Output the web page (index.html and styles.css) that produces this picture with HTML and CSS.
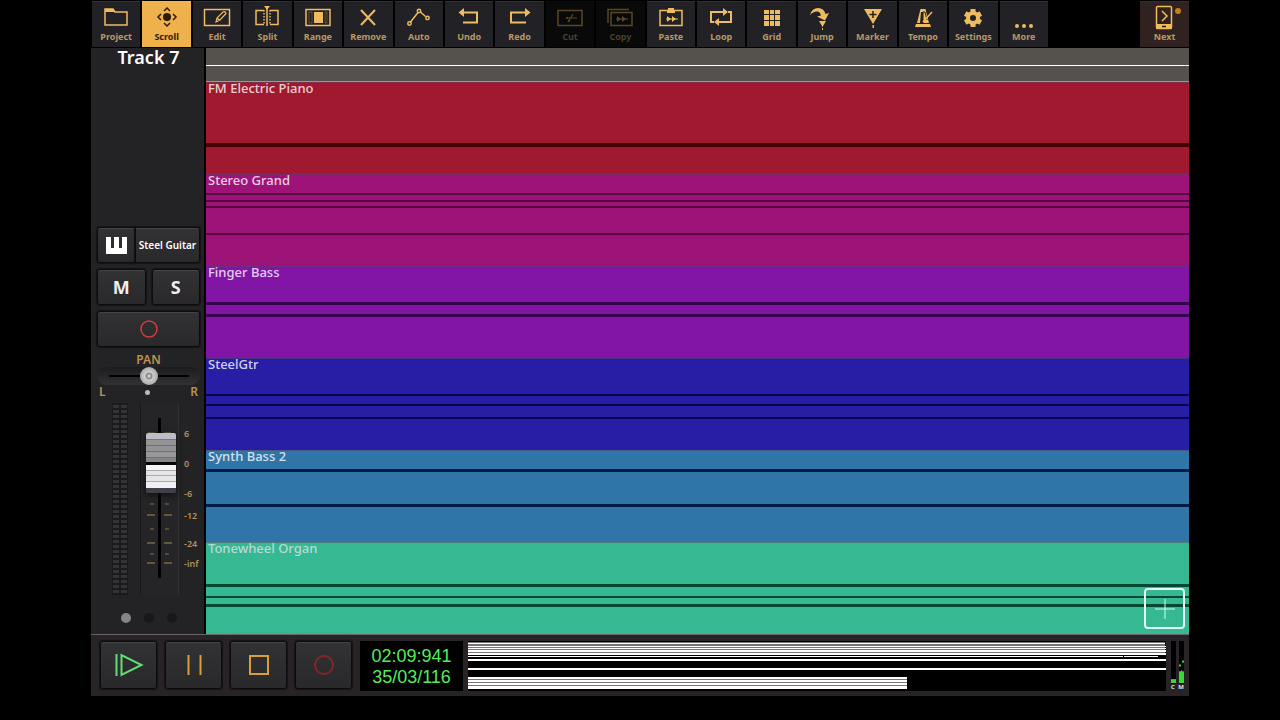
FILE: index.html
```html
<!DOCTYPE html>
<html lang="en">

<head>
    <meta charset="UTF-8">
    <meta name="viewport" content="width=device-width, initial-scale=1.0">
    <title>Track 7</title>
    <link rel="stylesheet" href="styles.css">
</head>

<body>
    <div class="app">
        <nav class="toolbar">
            <button class="tool" type="button">
                <svg class="icon" viewBox="0 0 28 28"><path d="M3 21V5h8l2 3h12v13z" /><path class="fill" d="M3 5h8l2 3H3z" /></svg>
                Project
            </button>
            <button class="tool active" type="button">
                <svg class="icon" viewBox="0 0 28 28"><circle class="fill" cx="14" cy="13" r="4" /><path d="M11 7l3-3 3 3M11 19l3 3 3-3M8 10l-3 3 3 3M20 10l3 3-3 3" /></svg>
                Scroll
            </button>
            <button class="tool" type="button">
                <svg class="icon" viewBox="0 0 28 28"><path d="M1.500 5.500h25v16h-25z" /><path d="M13 18l1-4 6-6q2-1 3 1.500l-6 6.500zM14 14l3 2.500" stroke-width="1.200" /></svg>
                Edit
            </button>
            <button class="tool" type="button">
                <svg class="icon" viewBox="0 0 28 28"><path d="M11 6.500H3v14h8M17 6.500h8v14h-8" /><path d="M11 6v15M17 6v15" stroke-dasharray="1.500 1.500" /><path d="M14 4v18" /><path class="fill" d="M11 2h6l-3 4z" /></svg>
                Split
            </button>
            <button class="tool" type="button">
                <svg class="icon" viewBox="0 0 28 28"><path d="M2 5.500h24v16H2z" /><path class="fill" d="M10 8h9v11h-9z" /><path d="M5 8h3v11H5zM21 8h2v11h-2z" stroke-width="1" opacity=".3" /></svg>
                Range
            </button>
            <button class="tool" type="button">
                <svg class="icon" viewBox="0 0 28 28"><path d="M7 6l14 15M21 6L7 21" stroke-width="2" /></svg>
                Remove
            </button>
            <button class="tool" type="button">
                <svg class="icon" viewBox="0 0 28 28"><path d="M5.500 18L13 8.500M15.500 8l5 4.500" /><circle cx="4.500" cy="19.500" r="1.700" /><circle cx="14" cy="7" r="1.700" /><circle cx="22.500" cy="14" r="1.700" /></svg>
                Auto
            </button>
            <button class="tool" type="button">
                <svg class="icon" viewBox="0 0 28 28"><path d="M8 8.500h14v10H8" stroke-width="2" /><path class="fill" d="M9 4v9L3.500 8.500z" /></svg>
                Undo
            </button>
            <button class="tool" type="button">
                <svg class="icon" viewBox="0 0 28 28"><path d="M20 8.500H5v10h15" stroke-width="2" /><path class="fill" d="M19 4v9l5.500-4.500z" /></svg>
                Redo
            </button>
            <button class="tool" type="button" disabled>
                <svg class="icon" viewBox="0 0 28 28"><path d="M2 6.500h24v15H2z" /><path d="M10 14h11M12 18l5-8" stroke-width="1.200" /><circle class="fill" cx="11" cy="14" r="1" /><circle class="fill" cx="13" cy="17" r="1" /></svg>
                Cut
            </button>
            <button class="tool" type="button" disabled>
                <svg class="icon" viewBox="0 0 28 28"><path d="M5 8.500h21v13H5zM2 19V5.500h21" /><path class="fill" d="M11 12l4 3-4 3zM16 12l4 3-4 3z" /><path d="M10 15h12" stroke-width="1" /></svg>
                Copy
            </button>
            <button class="tool" type="button">
                <svg class="icon" viewBox="0 0 28 28"><path d="M3 6.500h22v15H3z" /><path class="fill" d="M11 6V4h6v2h1v3h-8V6zM10 12l4 3-4 3zM15 12l4 3-4 3z" /><path d="M9 15h12" stroke-width="1" /></svg>
                Paste
            </button>
            <button class="tool" type="button">
                <svg class="icon" viewBox="0 0 28 28"><path d="M7 18H4V8h13M21 8h3v10H11" stroke-width="2" /><path class="fill" d="M16 4v8l5-4zM12 14v8l-5-4z" /></svg>
                Loop
            </button>
            <button class="tool" type="button">
                <svg class="icon" viewBox="0 0 28 28"><path class="fill" d="M6 6h5v4H6zM12 6h4v4h-4zM17 6h5v4h-5zM6 11h5v5H6zM12 11h4v5h-4zM17 11h5v5h-5zM6 17h5v5H6zM12 17h4v5h-4zM17 17h5v5h-5z" /></svg>
                Grid
            </button>
            <button class="tool" type="button">
                <svg class="icon" viewBox="0 0 28 28"><path class="fill" d="M2 11Q4 4 10 4q6 0 7.500 6l3.500-1-4 7.500-8-4 4-1q-1-4-4-4-4 0-7 3.500zM11 17h7l-3.500 6zM14 24h1v2h-1z" /></svg>
                Jump
            </button>
            <button class="tool" type="button">
                <svg class="icon" viewBox="0 0 28 28"><path class="fill" d="M5 5h18l-9 15zM13.500 21h1.500v3h-1.500z" /><path class="cutout" d="M14 7v7M10.500 10.500h7" /></svg>
                Marker
            </button>
            <button class="tool" type="button">
                <svg class="icon" viewBox="0 0 28 28"><path class="fill" d="M6 23l1-3h14l1 3zM8 19l3.500-14h5L20 19h-6v-11l-2 0-1 11z" /><path class="cutout" d="M14 19V8h2l2 8" stroke-width="1" /><path d="M14 18l9-10" /></svg>
                Tempo
            </button>
            <button class="tool" type="button">
                <svg class="icon" viewBox="0 0 28 28"><circle cx="14" cy="14" r="5" stroke-width="4" /><path d="M14 5v3M14 20v3M6.200 9.500l2.600 1.500M19.200 17l2.600 1.500M6.200 18.500l2.600-1.500M19.200 11l2.600-1.500" stroke-width="5" /></svg>
                Settings
            </button>
            <button class="tool" type="button">
                <svg class="icon" viewBox="0 0 28 28"><circle class="fill" cx="7" cy="22" r="2" /><circle class="fill" cx="14" cy="22" r="2" /><circle class="fill" cx="21" cy="22" r="2" /></svg>
                More
            </button>
            <button class="tool next" type="button">
                <svg class="icon" viewBox="0 0 28 28"><rect x="6.500" y="2.500" width="15" height="22" rx="1" /><path class="fill" d="M6 20h16v5H6z" /><path class="cutout" d="M12 22.500h4" /><path d="M12 7l5 5-5 5" /></svg>
                Next
                <span class="badge"></span>
            </button>
        </nav>

        <main class="workspace">
            <aside class="channel">
                <h1 class="channel-name">Track 7</h1>
                <div class="instrument">
                    <button class="key instrument-keys" type="button" aria-label="Keyboard">
                        <svg class="keys-icon" viewBox="0 0 21 17"><path d="M0 0h5v11h3V0h5v11h3V0h5v17H0z" /></svg>
                    </button>
                    <button class="key instrument-name" type="button">Steel Guitar</button>
                </div>
                <div class="mute-solo">
                    <button class="key" type="button" aria-label="Mute">M</button>
                    <button class="key" type="button" aria-label="Solo">S</button>
                </div>
                <button class="key arm" type="button" aria-label="Record arm">
                    <svg class="ring" viewBox="0 0 18 18"><circle cx="9" cy="9" r="8" /></svg>
                </button>

                <div class="pan">
                    <label class="pan-label" for="pan">PAN</label>
                    <input class="pan-slider" id="pan" type="range" min="-64" max="64" value="0">
                    <div class="pan-ends"><span>L</span><span class="pan-center"></span><span>R</span></div>
                </div>

                <div class="levels">
                    <div class="led-meter"></div>
                    <div class="fader">
                        <svg class="fader-scale" viewBox="0 0 62 192">
                            <path class="slot" d="M19.500 15v160" />
                            <path class="ticks" d="M8 30h7M24 30h7M7 112h8M24 112h8M7 140h8M24 140h8M7 160h8M24 160h8" />
                            <path class="ticks minor" d="M10 101h4M25 101h4M10 126h4M25 126h4M10 151h4M25 151h4" />
                            <text x="44" y="34">6</text>
                            <text x="44" y="64">0</text>
                            <text x="44" y="94">-6</text>
                            <text x="44" y="116">-12</text>
                            <text x="44" y="144">-24</text>
                            <text x="44" y="164">-inf</text>
                        </svg>
                        <input class="fader-slider" type="range" min="0" max="100" value="77" aria-label="Volume">
                    </div>
                </div>
                <div class="pages">
                    <span class="page current"></span>
                    <span class="page"></span>
                    <span class="page"></span>
                </div>
            </aside>

            <section class="arrange">
                <div class="ruler"></div>
                <div class="track red">
                    <svg class="notes" viewBox="0 0 100 92" preserveAspectRatio="none"><path d="M0 61h100v4H0z" /></svg>
                    <span class="clip-name">FM Electric Piano</span>
                </div>
                <div class="track magenta">
                    <svg class="notes" viewBox="0 0 100 92" preserveAspectRatio="none"><path d="M0 19h100v2H0zM0 26h100v2H0zM0 32h100v2H0zM0 59h100v2H0z" /></svg>
                    <span class="clip-name">Stereo Grand</span>
                </div>
                <div class="track purple">
                    <svg class="notes" viewBox="0 0 100 92" preserveAspectRatio="none"><path d="M0 36h100v3H0zM0 48h100v3H0z" /></svg>
                    <span class="clip-name">Finger Bass</span>
                </div>
                <div class="track blue">
                    <svg class="notes" viewBox="0 0 100 92" preserveAspectRatio="none"><path d="M0 36h100v2H0zM0 46h100v2H0zM0 59h100v2H0z" /></svg>
                    <span class="clip-name">SteelGtr</span>
                </div>
                <div class="track steel">
                    <svg class="notes" viewBox="0 0 100 92" preserveAspectRatio="none"><path d="M0 19h100v3H0zM0 54h100v3H0z" /></svg>
                    <span class="clip-name">Synth Bass 2</span>
                </div>
                <div class="track green">
                    <svg class="notes" viewBox="0 0 100 92" preserveAspectRatio="none"><path d="M0 42h100v3H0zM0 54h100v2H0zM0 62h100v3H0z" /></svg>
                    <span class="clip-name">Tonewheel Organ</span>
                </div>
                <button class="add-track" type="button" aria-label="Add track">
                    <svg viewBox="0 0 20 20"><path d="M10 0v20M0 10h20" /></svg>
                </button>
            </section>
        </main>

        <footer class="transport">
            <button class="key play" type="button" aria-label="Play">
                <svg viewBox="0 0 30 24"><path d="M2.500 1v22M7.500 2v20l20-10z" /></svg>
            </button>
            <button class="key pause" type="button" aria-label="Pause">
                <svg viewBox="0 0 30 24"><path d="M9.500 2v20M21.500 2v20" /></svg>
            </button>
            <button class="key stop" type="button" aria-label="Stop">
                <svg viewBox="0 0 30 24"><path d="M6 3h18v18H6z" /></svg>
            </button>
            <button class="key record" type="button" aria-label="Record">
                <svg viewBox="0 0 30 24"><circle cx="15" cy="12" r="9" /></svg>
            </button>
            <div class="clock">
                <span>02:09:941</span>
                <span>35/03/116</span>
            </div>
            <svg class="overview" viewBox="0 0 698 50" preserveAspectRatio="none">
                <path class="shade" d="M0 1h697v12H0zM0 36h439v12H0z" />
                <path class="line" d="M0 2h697v1H0zM0 5h698v1H0zM0 7h698v1H0zM0 9h698v2H0zM0 12h698v2H0zM0 15h690v1H0zM0 18h698v2H0zM0 27h698v2H0zM0 36h439v2H0zM0 39h439v2H0zM0 42h439v2H0zM0 45h439v3H0z" />
                <path class="gap" d="M655 14h1v3h-1z" />
            </svg>
            <div class="meters">
                <div class="meter">
                    <svg viewBox="0 0 5 44" preserveAspectRatio="none"><path d="M0 39h5v4H0z" /></svg>
                    C
                </div>
                <div class="meter">
                    <svg viewBox="0 0 5 44" preserveAspectRatio="none"><path d="M0 31h2v-1h1v1h2v12H0zM0 24h2v2H0zM3 20h2v2H3z" /></svg>
                    M
                </div>
            </div>
        </footer>
    </div>
</body>

</html>
```
FILE: styles.css
```css
* {
    box-sizing: border-box;
}

body {
    margin: 0;
    background-color: #000;
    font-family: "Noto Sans", "Open Sans", sans-serif;
    color: #fff;
}

button {
    margin: 0;
    padding: 0;
    border: none;
    font-family: inherit;
    color: inherit;
    cursor: pointer;
}

svg {
    display: block;
}

.app {
    display: flex;
    flex-direction: column;
    min-height: 100vh;
    padding: 0 91px 24px;
}

/* toolbar */

.toolbar {
    display: grid;
    grid-template-columns: repeat(19, 1fr) 88px 49px;
    gap: 2px;
    padding: 1px 0 1px 1px;
    height: 48px;
}

.tool {
    position: relative;
    display: flex;
    flex-direction: column;
    align-items: center;
    min-width: 0;
    padding-top: 2px;
    border-top: 1px solid #302f33;
    background-color: #222125;
    font-size: 9px;
    font-weight: 700;
    line-height: 10px;
    color: #b99863;
}

.icon {
    width: 28px;
    height: 28px;
    fill: none;
    stroke: #eebb60;
    stroke-width: 1.5;
}

.icon .fill {
    fill: #eebb60;
    stroke: none;
}

.icon .cutout {
    stroke: #222125;
}

.tool.active {
    border-color: #f5b952;
    background-color: #efb14b;
    color: #2c1d08;
}

.active .icon {
    stroke: #2c1d08;
}

.active .icon .fill {
    fill: #2c1d08;
}

.tool:disabled {
    border-color: #0b0b0b;
    background-color: #090909;
    color: #4b3f2b;
    cursor: default;
}

.tool:disabled .icon {
    opacity: 0.35;
}

.next {
    grid-column: 21;
    background-color: #30231f;
}

.badge {
    position: absolute;
    top: 6px;
    right: 8px;
    width: 6px;
    height: 6px;
    border-radius: 50%;
    background-color: #c87c22;
}

/* channel strip */

.workspace {
    display: flex;
    flex: 1;
}

.channel {
    display: flex;
    flex-direction: column;
    flex: none;
    width: 115px;
    padding: 0 4px 11px 6px;
    border-right: 2px solid #000;
    background-color: #232224;
}

.channel-name {
    margin: 0 0 auto;
    font-size: 18px;
    font-weight: 600;
    line-height: 18px;
    text-align: center;
}

.key {
    display: flex;
    align-items: center;
    justify-content: center;
    border: 1px solid #0c0c0d;
    border-radius: 3px;
    background: linear-gradient(#323134, #29282b);
    box-shadow: inset 0 1px #454447, 0 0 1px 1px #151416;
}

.instrument {
    display: flex;
    height: 36px;
    margin-bottom: 6px;
}

.instrument-keys {
    flex: none;
    width: 38px;
    border-radius: 3px 0 0 3px;
}

.keys-icon {
    width: 21px;
    fill: #fff;
}

.instrument-name {
    flex: 1;
    border-radius: 0 3px 3px 0;
    font-size: 10px;
    font-weight: 600;
    white-space: nowrap;
}

.mute-solo {
    display: grid;
    grid-template-columns: 1fr 1fr;
    gap: 6px;
    height: 36px;
    margin-bottom: 6px;
}

.mute-solo .key {
    font-size: 18px;
    font-weight: 700;
    color: #eee;
}

.arm {
    flex: none;
    height: 36px;
    margin-bottom: 6px;
}

.ring {
    width: 18px;
    fill: none;
    stroke: #d23c3c;
    stroke-width: 1.5;
}

.pan {
    display: flex;
    flex-direction: column;
    font-size: 12px;
    font-weight: 600;
    line-height: 14px;
    color: #bb9250;
}

.pan-label {
    text-align: center;
}

.pan-slider {
    appearance: none;
    width: 100%;
    height: 18px;
    margin: 0;
    border-radius: 9px;
    background:
        linear-gradient(#000, #000) center / 80px 2px no-repeat,
        linear-gradient(#1c1b1d, #323134);
}

.pan-slider::-webkit-slider-thumb {
    appearance: none;
    width: 18px;
    height: 18px;
    border: none;
    border-radius: 50%;
    background: radial-gradient(circle, #ccc 1px, #999 2px, #888 3px, #d0ced0 4px, #aaa 9px);
}

.pan-ends {
    display: flex;
    align-items: center;
    justify-content: space-between;
    padding: 0 2px;
}

.pan-center {
    width: 5px;
    height: 5px;
    border-radius: 50%;
    background-color: #bbb;
}

.levels {
    display: flex;
    gap: 12px;
    height: 192px;
    margin: 4px 0 18px;
    padding-left: 15px;
}

.led-meter {
    flex: none;
    width: 16px;
    background:
        linear-gradient(90deg, #1a191b 1px, transparent 1px, transparent 7px, #1a191b 7px, #1a191b 9px, transparent 9px, transparent 15px, #1a191b 15px),
        repeating-linear-gradient(#1a191b, #1a191b 2px, #333235 2px, #333235 5px);
}

.fader {
    display: grid;
    flex: none;
    width: 62px;
}

.fader-scale,
.fader-slider {
    grid-area: 1 / 1;
    height: 192px;
}

.fader-scale {
    width: 62px;
    font-size: 9px;
    font-weight: 600;
    fill: #b09060;
    background: linear-gradient(90deg, #19181a 1px, #252426 1px, #252426 38px, #302f32 38px, #302f32 39px, transparent 39px);
}

.slot {
    stroke: #000;
    stroke-width: 3;
}

.ticks {
    stroke: #a5864f;
}

.minor {
    stroke: #807050;
}

.fader-slider {
    appearance: none;
    writing-mode: vertical-lr;
    direction: rtl;
    width: 39px;
    margin: 0;
    background: transparent;
}

.fader-slider::-webkit-slider-thumb {
    appearance: none;
    width: 30px;
    height: 60px;
    margin-left: 3px;
    border-radius: 2px;
    background: linear-gradient(#bdbdc8 0 6px, #77777a 6px 7px, #939396 7px 12px, #707073 12px 13px, #939396 13px 18px, #707073 18px 19px, #98989b 19px 24px, #707073 24px 25px, #858588 25px 29px, #050505 29px 32px, #f4f4f6 32px 37px, #aaa 37px 38px, #e5e5e8 38px 42px, #aaa 42px 43px, #e5e5e8 43px 48px, #aaa 48px 49px, #f0f0f2 49px 55px, #40404a 55px);
    box-shadow: 0 2px 6px #111;
}

.pages {
    display: flex;
    justify-content: center;
    gap: 13px;
}

.page {
    width: 10px;
    height: 10px;
    border-radius: 50%;
    background-color: #19181a;
}

.page.current {
    background-color: #858487;
}

/* arrangement */

.arrange {
    position: relative;
    display: grid;
    grid-template-rows: 34px repeat(6, 1fr);
    flex: 1;
    min-width: 0;
}

.ruler {
    border-bottom: 1px solid #b18c91;
    background: linear-gradient(#fff, #fff) 0 17px / 100% 1px no-repeat #55524e;
}

.track {
    position: relative;
    box-shadow: inset 0 1px rgba(90, 70, 100, 0.5);
}

/* note lines lie behind the clip name */
.notes {
    position: absolute;
    inset: 0;
    width: 100%;
    height: 100%;
}

.clip-name {
    position: relative;
    display: block;
    padding-left: 2px;
    font-size: 13px;
    font-weight: 500;
    line-height: 13px;
    color: rgba(255, 255, 255, 0.8);
}

.red {
    background-color: #a01930;
    fill: #430006;
}

.magenta {
    background-color: #9e1378;
    fill: #57063f;
}

.purple {
    background-color: #8214a6;
    fill: #34044c;
}

.blue {
    background-color: #281ea6;
    fill: #090451;
}

.steel {
    background-color: #3075a8;
    fill: #041c43;
}

.green {
    background-color: #36b993;
    fill: #05482f;
}

.green .clip-name {
    color: rgba(220, 225, 225, 0.8);
}

.add-track {
    position: absolute;
    right: 4px;
    bottom: 5px;
    display: flex;
    align-items: center;
    justify-content: center;
    width: 41px;
    height: 41px;
    border: 2px solid #e2fff6;
    border-radius: 4px;
    background: transparent;
}

.add-track svg {
    width: 20px;
    stroke: #c8fff0;
}

/* transport */

.transport {
    display: flex;
    gap: 8px;
    height: 62px;
    padding: 6px 5px 5px 9px;
    border-top: 1px solid #696669;
    background-color: #282326;
}

.transport .key {
    flex: none;
    width: 57px;
    height: 48px;
}

.transport .key svg {
    width: 30px;
    fill: none;
    stroke-width: 2;
}

.play {
    stroke: #61df74;
}

.pause,
.stop {
    stroke: #d99e3c;
}

.record {
    stroke: #832529;
}

.clock {
    display: flex;
    flex-direction: column;
    align-items: center;
    justify-content: center;
    flex: none;
    width: 103px;
    padding-top: 2px;
    background-color: #000;
    font-family: "Liberation Sans", Arial, sans-serif;
    font-size: 18px;
    line-height: 21px;
    color: #55ec58;
}

.overview {
    flex: 1;
    min-width: 0;
    height: 50px;
    margin-left: -3px;
    background-color: #000;
}

.shade {
    fill: #777;
}

.line {
    fill: #fff;
}

.gap {
    fill: #000;
}

.meters {
    display: flex;
    gap: 2px;
    margin-left: -4px;
}

.meter {
    display: flex;
    flex-direction: column;
    align-items: center;
    width: 6px;
    font-size: 6px;
    font-weight: 600;
    line-height: 7px;
}

.meter svg {
    width: 5px;
    height: 44px;
    background-color: #000;
    fill: #32dc32;
}
```
